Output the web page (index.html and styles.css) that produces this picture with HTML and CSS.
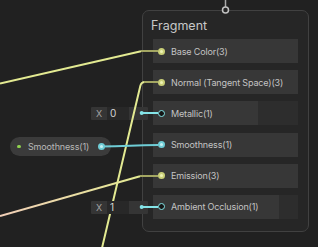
FILE: index.html
```html
<!DOCTYPE html>
<html>
<head>
<meta charset="utf-8">
<link rel="stylesheet" href="styles.css">
</head>
<body>
<div class="canvas">
  <div class="node fragment">
    <div class="node-title">Fragment</div>
    <div class="blocks">
      <div class="block"><div class="block-main"><span class="port port-vec3"></span><span class="label">Base Color(3)</span></div></div>
      <div class="block"><div class="block-main"><span class="port port-vec3"></span><span class="label">Normal (Tangent Space)(3)</span></div></div>
      <div class="block"><div class="block-main short-metal"><span class="port port-float-empty"></span><span class="label">Metallic(1)</span></div></div>
      <div class="block"><div class="block-main"><span class="port port-float"></span><span class="label">Smoothness(1)</span></div></div>
      <div class="block"><div class="block-main"><span class="port port-vec3"></span><span class="label">Emission(3)</span></div></div>
      <div class="block"><div class="block-main short-ao"><span class="port port-float-empty"></span><span class="label">Ambient Occlusion(1)</span></div></div>
    </div>
  </div>

  <div class="inline-field field-metallic"><span class="axis">X</span><span class="value">0</span></div>
  <div class="inline-field field-ao"><span class="axis">X</span><span class="value">1</span></div>

  <div class="prop-node">
    <span class="prop-dot"></span>
    <span class="prop-label">Smoothness(1)</span>
    <span class="port port-float"></span>
  </div>

  <svg class="wires" width="318" height="247" viewBox="0 0 318 247">
    <defs>
      <linearGradient id="emis" x1="0" y1="0" x2="140" y2="0" gradientUnits="userSpaceOnUse">
        <stop offset="0" stop-color="#f2cfb8"/>
        <stop offset="1" stop-color="#e3ea92"/>
      </linearGradient>
    </defs>
    <path d="M225.5 0 V7" stroke="#a9a9a9" stroke-width="1.5" fill="none"/>
    <circle cx="225.5" cy="10" r="3" stroke="#c2c2c2" stroke-width="1.5" fill="#262626"/>

    <path d="M0 83.5 L141 51.3" stroke="#e3ea92" stroke-width="2" fill="none"/>
    <path d="M141 51 H158" stroke="#a3a662" stroke-width="2" fill="none"/>

    <path d="M102 248 L140.3 86 Q141.2 82 145 82" stroke="#e3ea92" stroke-width="2" fill="none"/>
    <path d="M144 82 H158" stroke="#a3a662" stroke-width="2" fill="none"/>

    <path d="M0 216 L140 176.2" stroke="url(#emis)" stroke-width="2" fill="none"/>
    <path d="M140 176 H158" stroke="#a3a662" stroke-width="2" fill="none"/>

    <path d="M100 146.5 C 130 146.5, 130 145, 158 145" stroke="#6fcdd6" stroke-width="2" fill="none"/>

    <path d="M142 113 H158" stroke="#84e4e7" stroke-width="2" fill="none"/>
    <circle cx="141.7" cy="113" r="2" fill="#84e4e7"/>
    <path d="M142 207 H158" stroke="#84e4e7" stroke-width="2" fill="none"/>
    <circle cx="141.7" cy="207" r="2" fill="#84e4e7"/>
  </svg>
</div>
</body>
</html>
```

FILE: styles.css
```css
* { box-sizing: border-box; }
html, body {
  margin: 0;
  padding: 0;
  background: #212121;
}
body {
  font-family: Inter, "Noto Sans", "Liberation Sans", sans-serif;
}
.canvas {
  position: relative;
  width: 318px;
  height: 247px;
  overflow: hidden;
  background: #212121;
}
.node {
  position: absolute;
}
.fragment {
  left: 142px;
  top: 10px;
  width: 167px;
  height: 222px;
  border: 1px solid #414141;
  border-radius: 7px;
  background: #262626;
  padding: 7px 10px 0 7px;
  display: flex;
  flex-direction: column;
}
.node-title {
  font-size: 12.5px;
  line-height: 16px;
  color: #c8c8c8;
  margin-bottom: 5px;
  padding-left: 1px;
}
.blocks {
  display: flex;
  flex-direction: column;
  gap: 7.2px;
  padding-left: 3px;
}
.block {
  width: 145px;
  height: 24px;
  background: #2d2d2d;
  display: flex;
}
.block-main {
  flex: 1;
  background: #373737;
  display: flex;
  align-items: center;
  padding-left: 5px;
  gap: 6px;
}
.block-main.short-metal { flex: 0 0 105px; }
.block-main.short-ao { flex: 0 0 126px; }
.label {
  font-size: 9px;
  letter-spacing: -0.15px;
  color: #c4c4c4;
  white-space: nowrap;
}
.port {
  position: relative;
  z-index: 3;
  width: 7px;
  height: 7px;
  border-radius: 50%;
  flex: 0 0 7px;
  display: flex;
  align-items: center;
  justify-content: center;
}
.port::after {
  content: "";
  width: 3px;
  height: 3px;
  border-radius: 50%;
}
.port-vec3 {
  background: #c9cf78;
}
.port-vec3::after { background: #eef2b4; }
.port-float {
  background: #6fcdd6;
}
.port-float::after { background: #c6f2f4; }
.port-float-empty {
  border: 1.5px solid #84e4e7;
  background: #151515;
}
.port-float-empty::after { background: #151515; }

.inline-field {
  position: absolute;
  left: 91px;
  width: 57px;
  height: 13px;
  background: #353535;
  display: flex;
  align-items: center;
  border-radius: 1px;
}
.field-metallic { top: 107px; }
.field-ao { top: 201px; }
.axis {
  position: relative;
  z-index: 3;
  width: 16px;
  text-align: center;
  font-size: 9px;
  color: #a4a4a4;
}
.value {
  position: relative;
  z-index: 3;
  width: 22px;
  height: 13px;
  background: #282828;
  font-size: 10px;
  line-height: 13px;
  color: #d4d4d4;
  padding-left: 3px;
}

.prop-node {
  position: absolute;
  left: 10px;
  top: 137px;
  width: 101px;
  height: 19px;
  border-radius: 10px;
  background: #3b3b3b;
  display: flex;
  align-items: center;
  padding-left: 7px;
}
.prop-dot {
  width: 3.5px;
  height: 3.5px;
  border-radius: 50%;
  background: #8fd14f;
  flex: 0 0 3.5px;
}
.prop-label {
  font-size: 9px;
  letter-spacing: -0.15px;
  color: #b9b9b9;
  margin-left: 7.5px;
  white-space: nowrap;
}
.prop-node .port {
  margin-left: 9px;
}
.wires {
  position: absolute;
  left: 0;
  top: 0;
  z-index: 2;
  pointer-events: none;
}
```
